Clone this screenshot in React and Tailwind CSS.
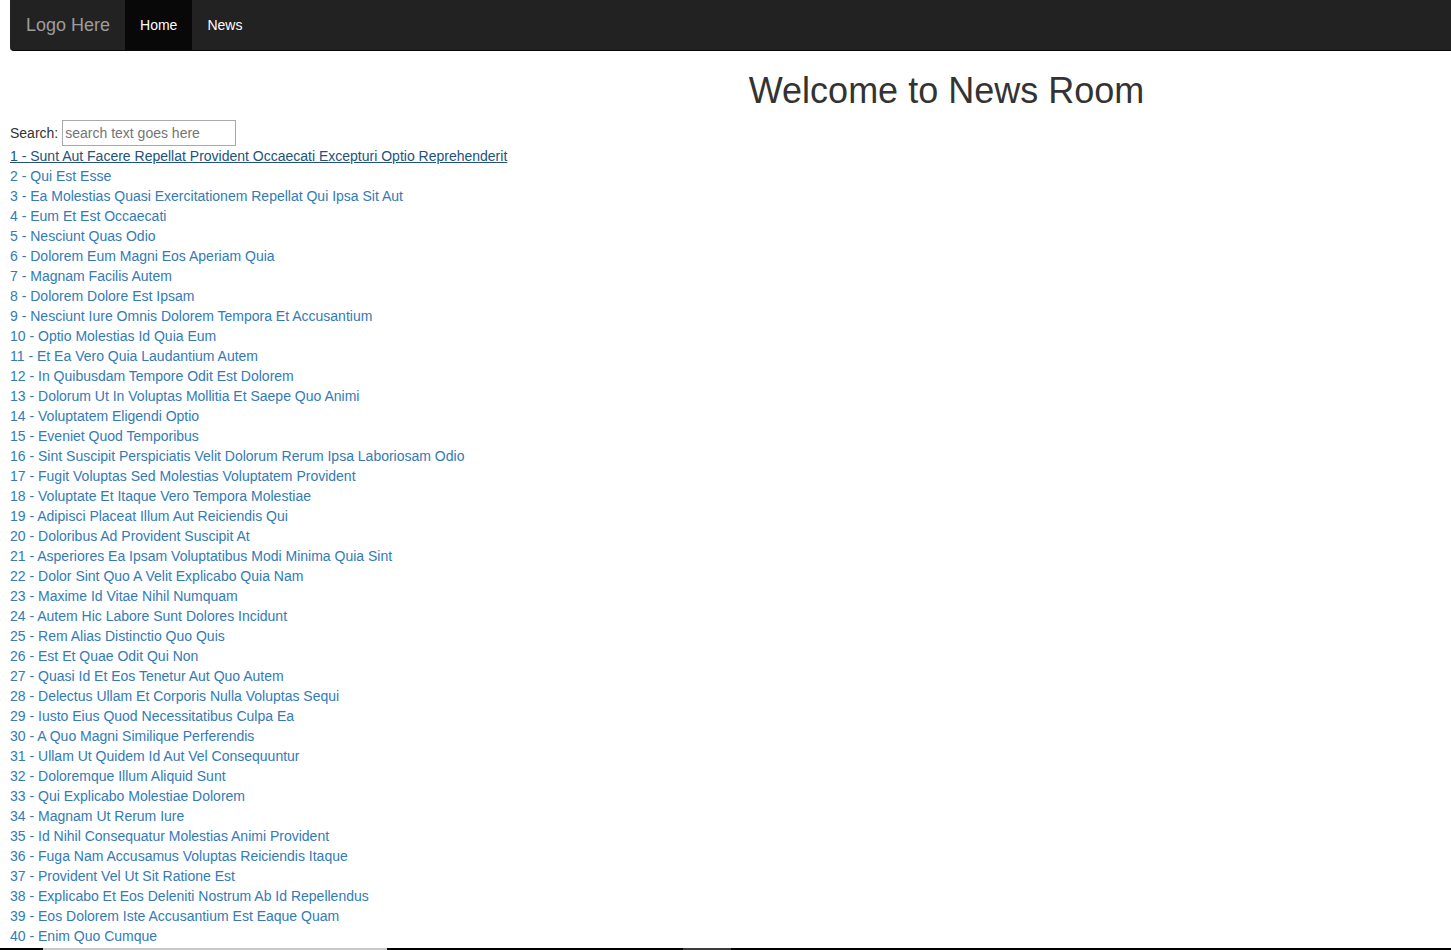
import { useState } from "react";

const posts = [
  "Sunt Aut Facere Repellat Provident Occaecati Excepturi Optio Reprehenderit",
  "Qui Est Esse",
  "Ea Molestias Quasi Exercitationem Repellat Qui Ipsa Sit Aut",
  "Eum Et Est Occaecati",
  "Nesciunt Quas Odio",
  "Dolorem Eum Magni Eos Aperiam Quia",
  "Magnam Facilis Autem",
  "Dolorem Dolore Est Ipsam",
  "Nesciunt Iure Omnis Dolorem Tempora Et Accusantium",
  "Optio Molestias Id Quia Eum",
  "Et Ea Vero Quia Laudantium Autem",
  "In Quibusdam Tempore Odit Est Dolorem",
  "Dolorum Ut In Voluptas Mollitia Et Saepe Quo Animi",
  "Voluptatem Eligendi Optio",
  "Eveniet Quod Temporibus",
  "Sint Suscipit Perspiciatis Velit Dolorum Rerum Ipsa Laboriosam Odio",
  "Fugit Voluptas Sed Molestias Voluptatem Provident",
  "Voluptate Et Itaque Vero Tempora Molestiae",
  "Adipisci Placeat Illum Aut Reiciendis Qui",
  "Doloribus Ad Provident Suscipit At",
  "Asperiores Ea Ipsam Voluptatibus Modi Minima Quia Sint",
  "Dolor Sint Quo A Velit Explicabo Quia Nam",
  "Maxime Id Vitae Nihil Numquam",
  "Autem Hic Labore Sunt Dolores Incidunt",
  "Rem Alias Distinctio Quo Quis",
  "Est Et Quae Odit Qui Non",
  "Quasi Id Et Eos Tenetur Aut Quo Autem",
  "Delectus Ullam Et Corporis Nulla Voluptas Sequi",
  "Iusto Eius Quod Necessitatibus Culpa Ea",
  "A Quo Magni Similique Perferendis",
  "Ullam Ut Quidem Id Aut Vel Consequuntur",
  "Doloremque Illum Aliquid Sunt",
  "Qui Explicabo Molestiae Dolorem",
  "Magnam Ut Rerum Iure",
  "Id Nihil Consequatur Molestias Animi Provident",
  "Fuga Nam Accusamus Voluptas Reiciendis Itaque",
  "Provident Vel Ut Sit Ratione Est",
  "Explicabo Et Eos Deleniti Nostrum Ab Id Repellendus",
  "Eos Dolorem Iste Accusantium Est Eaque Quam",
  "Enim Quo Cumque",
];

const App = () => {
  const [search, setSearch] = useState("");

  const filtered = posts
    .map((title, i) => ({ id: i + 1, title }))
    .filter((p) => p.title.toLowerCase().includes(search.toLowerCase()));

  return (
    <div className="w-full overflow-hidden bg-white text-[14px] leading-[20px] text-[#333] font-['Liberation_Sans',Arial,sans-serif]">
      <div className="ml-[10px] w-[1872px]">
        {/* navbar */}
        <nav className="flex h-[51px] rounded-b-[4px] border-b border-[#080808] bg-[#222]">
          <a href="#" className="px-[15px] py-[15px] pl-[16px] text-[18px] leading-[20px] text-[#9d9d9d]">
            Logo Here
          </a>
          <ul className="flex">
            <li>
              <a href="#" className="block bg-[#080808] px-[15px] py-[15px] text-white">
                Home
              </a>
            </li>
            <li>
              <a href="#" className="block px-[15px] py-[15px] text-white">
                News
              </a>
            </li>
          </ul>
        </nav>

        <h1 className="mt-[20px] mb-[9px] pl-[1px] text-center text-[36px] leading-[40px] font-normal text-[#333]">
          Welcome to News Room
        </h1>
      </div>

      <div className="px-[10px]">
        <div className="flex h-[26px] items-center">
          <label htmlFor="search" className="mr-[4px]">Search:</label>
          <input
            id="search"
            value={search}
            onChange={(e) => setSearch(e.target.value)}
            placeholder="search text goes here"
            className="h-[26px] w-[174px] border border-[#a9a9a9] px-[2px] text-[14px] text-[#333] placeholder:text-[#757575] outline-none"
          />
        </div>

        <div>
          {filtered.map((p) => (
            <div key={p.id}>
              <a
                href="#"
                className={
                  p.id === 1
                    ? "text-[#23527c] underline"
                    : "text-[#337ab7] hover:text-[#23527c] hover:underline"
                }
              >
                {p.id} - {p.title}
              </a>
            </div>
          ))}
          {[41, 42, 43].map((n) => (
            <div key={n} className="h-[20px]" />
          ))}
        </div>
      </div>

      {/* taskbar edge from the screenshot */}
      <div className="fixed bottom-0 left-0 right-0 flex h-[2px] bg-black">
        <div className="ml-[43px] w-[344px] bg-[#c8c8c8]" />
        <div className="ml-[296px] w-[48px] bg-[#3c3c3c]" />
      </div>
    </div>
  );
};

export default App;
